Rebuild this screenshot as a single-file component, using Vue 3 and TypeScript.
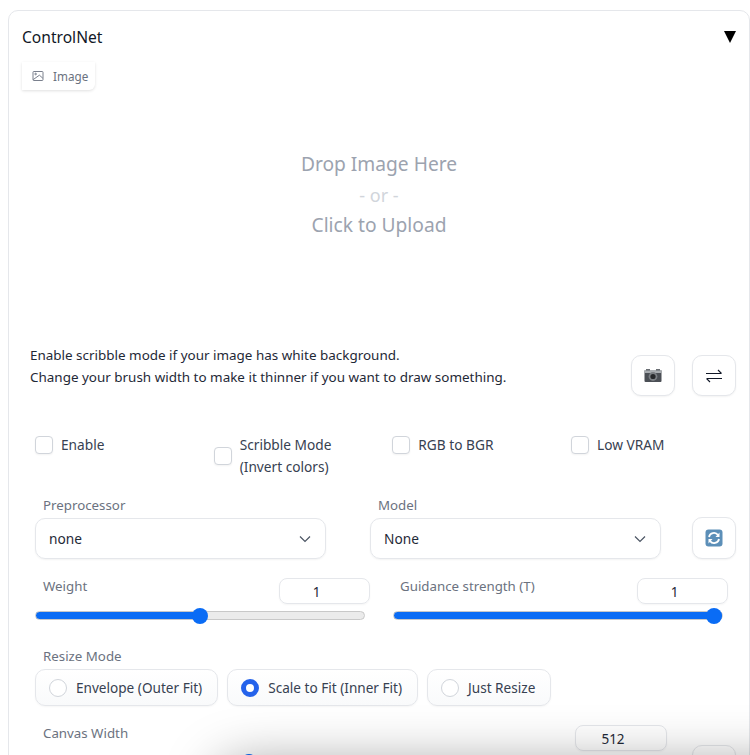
<script setup lang="ts">
const checks = [
  { label: "Enable", lines: [] as string[] },
  { label: "Scribble Mode", lines: ["(Invert colors)"] },
  { label: "RGB to BGR", lines: [] as string[] },
  { label: "Low VRAM", lines: [] as string[] }
]

const resizeModes = [
  { label: "Envelope (Outer Fit)", checked: false },
  { label: "Scale to Fit (Inner Fit)", checked: true },
  { label: "Just Resize", checked: false }
]

const fill = (pct: number) => ({
  background: `linear-gradient(to right, #0a6cf5 ${pct}%, #ebebeb ${pct}%)`
})
</script>

<template>
  <div class="page">
    <section class="card">
      <header class="card-head">
        <span class="title">ControlNet</span>
        <span class="caret"></span>
      </header>

      <div class="tab-row">
        <div class="image-tab">
          <svg class="tab-icon" viewBox="0 0 12 12" fill="none" stroke="#6b7280" stroke-width="0.9">
            <rect x="1" y="1.5" width="10" height="9" rx="0.8" />
            <circle cx="3.6" cy="4" r="0.8" />
            <path d="M1.2 9.6 L7.4 5.2 L10.8 8.2" />
          </svg>
          <span>Image</span>
        </div>
      </div>

      <div class="drop-zone">
        <div>Drop Image Here</div>
        <div class="drop-or">- or -</div>
        <div>Click to Upload</div>
      </div>

      <div class="hint-row">
        <p class="hint">
          Enable scribble mode if your image has white background.<br />
          Change your brush width to make it thinner if you want to draw something.
        </p>
        <div class="tool-btns">
          <button class="tool-btn">
            <svg width="20" height="16" viewBox="0 0 20 16">
              <rect x="1.5" y="2" width="17" height="12" rx="1" fill="#4b4f55" />
              <rect x="1.5" y="2" width="17" height="3" fill="#a8acb0" />
              <rect x="3" y="1" width="4" height="1.6" fill="#6b6f74" />
              <rect x="13" y="1" width="4" height="1.6" fill="#6b6f74" />
              <circle cx="10" cy="8.5" r="4.4" fill="#7b7f84" />
              <circle cx="10" cy="8.5" r="2.6" fill="#26282b" />
            </svg>
          </button>
          <button class="tool-btn">
            <svg width="18" height="14" viewBox="0 0 18 14" fill="none" stroke="#111827" stroke-width="1.1">
              <path d="M1 4.5 H16.5 M13 1 L16.5 4.5" />
              <path d="M17 9.5 H1.5 M5 13 L1.5 9.5" />
            </svg>
          </button>
        </div>
      </div>

      <div class="check-grid">
        <label v-for="c in checks" :key="c.label" class="check">
          <input type="checkbox" class="box" />
          <span class="check-text">
            {{ c.label }}
            <template v-for="l in c.lines" :key="l"><br />{{ l }}</template>
          </span>
        </label>
      </div>

      <div class="select-row">
        <div class="field">
          <div class="field-label">Preprocessor</div>
          <div class="select">
            <span>none</span>
            <svg class="chevron" viewBox="0 0 12 8" fill="none" stroke="#4b5563" stroke-width="1.2">
              <path d="M1 1.5 L6 6.5 L11 1.5" />
            </svg>
          </div>
        </div>
        <div class="field">
          <div class="field-label">Model</div>
          <div class="select">
            <span>None</span>
            <svg class="chevron" viewBox="0 0 12 8" fill="none" stroke="#4b5563" stroke-width="1.2">
              <path d="M1 1.5 L6 6.5 L11 1.5" />
            </svg>
          </div>
        </div>
        <button class="tool-btn refresh">
          <svg width="18" height="18" viewBox="0 0 18 18">
            <rect x="0.5" y="0.5" width="17" height="17" rx="3" fill="#5c8fb8" />
            <path d="M4 8 A5 5 0 0 1 13 6" fill="none" stroke="#fff" stroke-width="1.8" />
            <path d="M14.5 3.5 V8 H10.5 Z" fill="#fff" />
            <path d="M14 10 A5 5 0 0 1 5 12" fill="none" stroke="#fff" stroke-width="1.8" />
            <path d="M3.5 14.5 V10 H7.5 Z" fill="#fff" />
          </svg>
        </button>
      </div>

      <div class="slider-row">
        <div class="slider-block weight">
          <div class="slider-head">
            <span class="field-label">Weight</span>
            <span class="num">1</span>
          </div>
          <input class="range" type="range" min="0" max="2" step="0.05" value="1" :style="fill(50)" />
        </div>
        <div class="slider-block guidance">
          <div class="slider-head">
            <span class="field-label">Guidance strength (T)</span>
            <span class="num">1</span>
          </div>
          <input class="range" type="range" min="0" max="1" step="0.01" value="1" :style="fill(100)" />
        </div>
      </div>

      <div class="resize">
        <div class="field-label">Resize Mode</div>
        <div class="radio-row">
          <label v-for="m in resizeModes" :key="m.label" class="radio">
            <input type="radio" name="resize" class="dot" :checked="m.checked" />
            <span>{{ m.label }}</span>
          </label>
        </div>
      </div>

      <div class="canvas-row">
        <div class="canvas-block">
          <div class="slider-head">
            <span class="field-label">Canvas Width</span>
            <span class="num">512</span>
          </div>
          <input class="range" type="range" min="256" max="1024" step="64" value="512" :style="fill(32)" />
        </div>
        <button class="tool-btn canvas-btn"></button>
      </div>
    </section>

    <div class="under-shadow"></div>
  </div>
</template>

<style>
html,
body {
  margin: 0;
  height: 755px;
  overflow: hidden;
  background: #fff;
}
</style>

<style scoped>
.page {
  position: relative;
  height: 755px;
  overflow: hidden;
  padding: 10px 0 0 8px;
  box-sizing: border-box;
  font-family: "Noto Sans", "Open Sans", sans-serif;
  font-size: 13.7px;
  color: #374151;
}
.card {
  border: 1px solid #e5e7eb;
  border-radius: 10px;
  height: 800px;
  box-sizing: border-box;
  padding: 0 13px;
}
.card-head {
  display: flex;
  justify-content: space-between;
  align-items: center;
  height: 51px;
}
.title {
  font-size: 15.6px;
  color: #111827;
}
.caret {
  width: 0;
  height: 0;
  border-left: 6.5px solid transparent;
  border-right: 6.5px solid transparent;
  border-top: 12px solid #000;
}
.tab-row {
  height: 28px;
}
.image-tab {
  display: inline-flex;
  align-items: center;
  gap: 9px;
  box-sizing: border-box;
  height: 28px;
  width: 73px;
  padding-left: 10px;
  border-radius: 0 0 6px 0;
  box-shadow: 0 1px 3px rgba(0, 0, 0, 0.12);
  font-size: 11.7px;
  color: #6b7280;
}
.tab-icon {
  width: 12px;
  height: 12px;
}
.drop-zone {
  height: 254px;
  box-sizing: border-box;
  padding-top: 59px;
  text-align: center;
  font-size: 19.2px;
  line-height: 30.5px;
  color: #9ca3af;
}
.drop-or {
  color: #d1d5db;
  font-size: 18px;
}
.hint-row {
  display: flex;
  justify-content: space-between;
  align-items: flex-start;
  height: 90px;
  padding-left: 8px;
}
.hint {
  margin: 0;
  font-size: 13.45px;
  line-height: 22px;
  color: #1f2937;
}
.tool-btns {
  display: flex;
  gap: 17px;
  margin-top: 11px;
}
.tool-btn {
  width: 44px;
  height: 41px;
  padding: 0;
  flex: none;
  display: flex;
  align-items: center;
  justify-content: center;
  background: #fff;
  border: 1px solid #e5e7eb;
  border-radius: 10px;
  box-shadow: 0 1px 2px rgba(0, 0, 0, 0.05);
}
.check-grid {
  display: grid;
  grid-template-columns: repeat(4, 162.67px);
  gap: 16px;
  height: 54px;
  padding-left: 13px;
}
.check {
  display: flex;
  align-items: center;
  align-self: start;
  gap: 8px;
  line-height: 22px;
  color: #374151;
}
.box {
  appearance: none;
  margin: 0;
  width: 18px;
  height: 18px;
  flex: none;
  background: #fff;
  border: 1px solid #d1d5db;
  border-radius: 4px;
  box-shadow: 0 1px 2px rgba(0, 0, 0, 0.05);
}
.select-row {
  display: flex;
  align-items: flex-end;
  padding-left: 13px;
  height: 71px;
}
.field {
  flex: none;
  width: 291px;
  margin-right: 44px;
}
.field + .field {
  margin-right: 31px;
}
.field-label {
  font-size: 13.3px;
  line-height: 20px;
  color: #6b7280;
  padding-left: 8px;
}
.select {
  margin-top: 3px;
  height: 41px;
  box-sizing: border-box;
  display: flex;
  align-items: center;
  justify-content: space-between;
  padding: 0 14px 0 13px;
  border: 1px solid #e5e7eb;
  border-radius: 10px;
  box-shadow: 0 1px 2px rgba(0, 0, 0, 0.05);
  color: #1f2937;
}
.chevron {
  width: 12px;
  height: 8px;
}
.refresh {
  height: 42px;
}
.slider-row {
  display: flex;
  padding-left: 13px;
  margin-top: 19px;
  height: 68px;
}
.weight {
  width: 335px;
  margin-right: 23px;
}
.guidance {
  width: 335px;
}
.guidance .field-label {
  padding-left: 7px;
}
.slider-head {
  display: flex;
  justify-content: space-between;
  height: 26px;
}
.slider-head .field-label {
  line-height: 16px;
}
.num {
  width: 91px;
  height: 26px;
  box-sizing: border-box;
  display: flex;
  align-items: center;
  justify-content: center;
  padding: 1px 16px 0 0;
  border: 1px solid #e5e7eb;
  border-radius: 8px;
  box-shadow: 0 1px 2px rgba(0, 0, 0, 0.04);
  color: #1f2937;
  font-size: 13.5px;
}
.range {
  appearance: none;
  display: block;
  margin: 7px 0 0;
  width: 330px;
  height: 9px;
  border-radius: 5px;
  border: 1px solid #c8c8c8;
  box-sizing: border-box;
}
.range::-webkit-slider-thumb {
  appearance: none;
  width: 16px;
  height: 16px;
  border-radius: 50%;
  background: #0a6cf5;
}
.resize {
  padding-left: 13px;
  height: 79px;
}
.radio-row {
  display: flex;
  gap: 9px;
  margin-top: 3px;
}
.radio {
  display: flex;
  align-items: center;
  gap: 9px;
  height: 37px;
  box-sizing: border-box;
  padding: 0 15px 0 13px;
  background: linear-gradient(to bottom, #fff, #f9fafb);
  border: 1px solid #e5e7eb;
  border-radius: 10px;
  box-shadow: 0 1px 2px rgba(0, 0, 0, 0.04);
  color: #374151;
  font-size: 13.6px;
}
.dot {
  appearance: none;
  margin: 0;
  width: 18px;
  height: 18px;
  flex: none;
  background: #fff;
  border: 1px solid #d1d5db;
  border-radius: 50%;
}
.dot:checked {
  background: #fff;
  border: 5px solid #2563eb;
}
.canvas-row {
  display: flex;
  padding-left: 13px;
}
.canvas-block {
  width: 632px;
}
.canvas-block .num {
  width: 92px;
}
.canvas-block .range {
  width: 632px;
  margin-top: 6px;
}
.canvas-btn {
  margin: 20px 0 0 25px;
}
.under-shadow {
  position: absolute;
  left: 215px;
  top: 762px;
  width: 640px;
  height: 60px;
  border-radius: 30px;
  box-shadow: 0 0 52px 0 rgba(0, 0, 0, 0.36);
}
</style>
